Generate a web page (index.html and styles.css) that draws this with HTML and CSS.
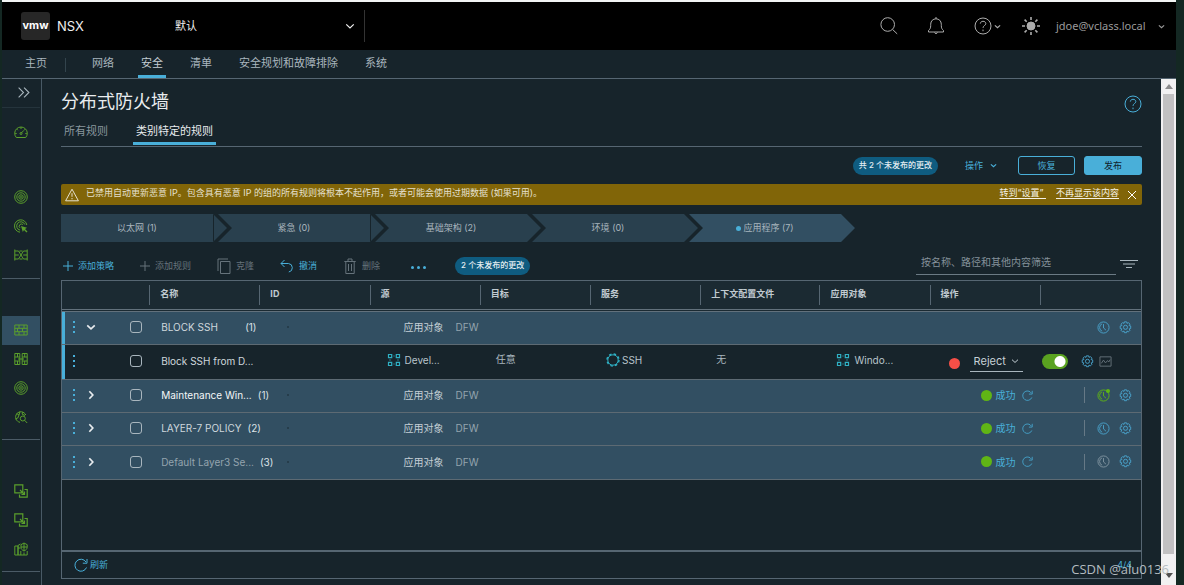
FILE: index.html
```html
<!DOCTYPE html>
<html lang="zh-CN">
<head>
<meta charset="utf-8">
<title>NSX - 分布式防火墙</title>
<link rel="stylesheet" href="styles.css">
</head>
<body>
<svg class="sprite" aria-hidden="true">
  <symbol id="chev-down" viewBox="0 0 12 12"><path d="M1.500 4l4.500 4.200L10.500 4"/></symbol>
  <symbol id="chev-right" viewBox="0 0 12 12"><path d="M4 1.500l4.200 4.500L4 10.500"/></symbol>
  <symbol id="double" viewBox="0 0 12 12"><path d="M1.500 1.500L6 6l-4.500 4.500M6.500 1.500L11 6l-4.500 4.500"/></symbol>
  <symbol id="search" viewBox="0 0 18 18"><circle cx="7.700" cy="7.500" r="6.800"/><path d="M12.600 12.500l4.600 4.400"/></symbol>
  <symbol id="bell" viewBox="0 0 18 18"><path d="M1.500 15v-1.500c1.500-1.200 2.200-2.500 2.200-5V7.200C3.700 4 6 1.800 9 1.800s5.300 2.200 5.300 5.400v1.300c0 2.500.7 3.800 2.200 5V15zM9 0v1.800M7.500 15.500a1.600 1.600 0 0 0 3 0"/></symbol>
  <symbol id="help" viewBox="0 0 18 18"><circle cx="9" cy="9" r="8"/><path d="M6.300 6.600C6.600 5 7.600 4.300 9 4.300c1.600 0 2.800.9 2.800 2.300 0 2-2.800 2-2.800 4.300"/><path d="M9 12.600v1.600"/></symbol>
  <symbol id="sun" viewBox="0 0 18 18"><circle cx="9" cy="9" r="4" fill="currentColor"/><path d="M9 0v3M9 15v3M0 9h3M15 9h3M2.600 2.600l2.100 2.100M13.300 13.300l2.100 2.100M15.400 2.600l-2.100 2.100M4.700 13.300l-2.100 2.100" stroke-width="1.600"/></symbol>
  <symbol id="gauge" viewBox="0 0 14 14"><path d="M2.300 12.500A6.300 6.300 0 1 1 11.700 12.500zM7 8.300l3-3M7 2v2M1.200 8.500h1.500M11.300 8.500h1.500M2.900 4.200l1 1M11.100 4.200l-.8.8"/><circle cx="7" cy="8.500" r="1"/></symbol>
  <symbol id="radar" viewBox="0 0 14 14"><circle cx="7" cy="7" r="6.300"/><circle cx="7" cy="7" r="4.200"/><circle cx="7" cy="7" r="2.200"/><circle cx="7" cy="7" r=".5"/></symbol>
  <symbol id="radar-cut" viewBox="0 0 14 14"><path d="M12.800 6A6.200 6.200 0 1 0 6 13.200M10.800 5.500a4.200 4.200 0 1 0-4.800 5.600M8.800 5.500a2.200 2.200 0 1 0-2.800 3.400"/><path d="M7 7l6 1.800-2 1.200 2.500 2.500-1 1L10 11l-1.200 2z" fill="currentColor" stroke="none"/></symbol>
  <symbol id="flow" viewBox="0 0 14 14"><path d="M.8 1.500v11M13.200 1.500v11M.8 3h3.700l5 8h3.700M.8 11h3.700l5-8h3.700M.8 7h4M9.200 7h4M5.500 3h3M5.500 11h3"/></symbol>
  <symbol id="brick" viewBox="0 0 14 12"><path d="M.8 1h12.400v10H.8zM.8 4.300h12.400M.8 7.700h12.400M5 1v3.300M10 1v3.300M3.500 4.300v3.400M8.500 4.300v3.400M5 7.700V11M10 7.700V11"/></symbol>
  <symbol id="gateway" viewBox="0 0 14 14"><path d="M.8 1.500h5v11h-5zM8.200 1.500h5v11h-5zM.8 5h5M.8 9h5M8.200 5h5M8.200 9h5M3.500 1.500V5M3.500 9v3.500M10.700 1.500V5M10.700 9v3.500M4 7h6"/></symbol>
  <symbol id="hunt" viewBox="0 0 14 14"><path d="M11.800 5A5.300 5.300 0 1 0 6 12.300M2.500 3.500L5 5l1-3.500M5 5L3.800 8 1.500 9M9 2L8 4l3 1.500"/><circle cx="8.800" cy="8.500" r="2.500"/><path d="M10.600 10.300l2.600 2.700"/></symbol>
  <symbol id="copy-link" viewBox="0 0 14 14"><path d="M.8.800h8v8h-8zM10.500 5.500h2.700v7.700H5.500v-2.700M6 6l4.500 4.500M10.500 7.500v3h-3" stroke-width="1.200"/></symbol>
  <symbol id="city" viewBox="0 0 14 14"><path d="M.8 13V4H4v9M4 6h2.500M.8 13h12.400V9M4 13V3.500L6.500 2M6.800 9v4M10 10.500V13M7 2.700L10 1l3.200 1.700V5c0 2-1.300 3.200-3.200 4-1.900-.8-3-2-3-4zM10 1v8M7 5h6"/></symbol>
  <symbol id="warn" viewBox="0 0 14 14"><path d="M7 1.200L13.400 12.800H.6zM7 5.200v3.600M7 10v1.300"/></symbol>
  <symbol id="cross" viewBox="0 0 10 10"><path d="M1 1l8 8M9 1L1 9"/></symbol>
  <symbol id="plus" viewBox="0 0 10 10"><path d="M5 0v10M0 5h10"/></symbol>
  <symbol id="copy" viewBox="0 0 14 16"><path d="M3.500 3.500h9.500v12H3.500zM1 13V1h10"/></symbol>
  <symbol id="undo" viewBox="0 0 14 14"><path d="M4.500 1L1 4.500 4.500 8M1 4.500h7.500A4.300 4.300 0 0 1 8.800 13"/></symbol>
  <symbol id="trash" viewBox="0 0 12 16"><path d="M.3 3.500h11.400M1.800 3.500v12h8.400v-12M4 3V1h4v2M4.500 6v7M7.500 6v7"/></symbol>
  <symbol id="filter" viewBox="0 0 18 10"><path d="M0 1.500h18M3 5h12M6 8.500h6"/></symbol>
  <symbol id="group" viewBox="0 0 14 14"><path d="M1.500 1.500h3.200v3.200H1.500zM9.300 1.500h3.200v3.200H9.300zM1.500 9.300h3.200v3.200H1.500zM9.300 9.300h3.200v3.200H9.300zM6.500 3h1M6.500 11h1M3 6.500v1M11 6.500v1" stroke-width="1.200"/></symbol>
  <symbol id="service" viewBox="0 0 14 14"><circle cx="7" cy="7" r="5.200"/><circle cx="7" cy="7" r="6" stroke-width="1.400" stroke-dasharray="2.500 2.200"/></symbol>
  <symbol id="clock" viewBox="0 0 14 14"><circle cx="7" cy="7" r="6"/><path d="M7 3.300V7.500l2.600 2.300M5.500 3A4.300 4.300 0 0 0 5.500 11"/></symbol>
  <symbol id="gear" viewBox="0 0 14 14"><path d="M5.800.9h2.400l.4 1.700 1.500-.9 1.700 1.700-.9 1.500 1.700.4v2.800l-1.700.4.9 1.500-1.700 1.700-1.500-.9-.4 1.800H5.800l-.4-1.800-1.500.9L2.200 10l.9-1.500-1.800-.4V5.300l1.800-.4-.9-1.500 1.700-1.700 1.500.9z"/><circle cx="7" cy="6.800" r="2.200"/></symbol>
  <symbol id="graph" viewBox="0 0 14 12"><path d="M1 1h12v10H1zM2.500 8l2.300-3.500L7 7.500 9.200 5l1.300 1.500L12 4"/></symbol>
  <symbol id="refresh" viewBox="0 0 14 14"><path d="M12.500 9.500A6 6 0 1 1 12 4M13 1v4.200H8.800"/></symbol>
</svg>

<div class="shell">
  <header class="topbar">
    <a class="brand" href="#"><span class="logo">vmw</span>NSX</a>
    <label class="tenant"><select aria-label="项目"><option>默认</option></select><svg class="ic s10"><use href="#chev-down"/></svg></label>
    <div class="tools">
      <button aria-label="搜索"><svg class="ic s18"><use href="#search"/></svg></button>
      <button aria-label="通知"><svg class="ic s18"><use href="#bell"/></svg></button>
      <button aria-label="帮助"><svg class="ic s18"><use href="#help"/></svg><svg class="ic s6"><use href="#chev-down"/></svg></button>
      <button aria-label="主题"><svg class="ic s18"><use href="#sun"/></svg></button>
      <button class="user">jdoe@vclass.local<svg class="ic s6"><use href="#chev-down"/></svg></button>
    </div>
  </header>

  <nav class="mainnav">
    <a class="home" href="#">主页</a>
    <a href="#">网络</a>
    <a class="on" href="#">安全</a>
    <a href="#">清单</a>
    <a href="#">安全规划和故障排除</a>
    <a href="#">系统</a>
  </nav>

  <div class="body">
    <nav class="side" aria-label="安全">
      <button class="expand" aria-label="展开"><svg class="ic s12"><use href="#double"/></svg></button>
      <div class="grp first">
        <a class="lead" href="#" aria-label="概览"><svg class="ic s14"><use href="#gauge"/></svg></a>
        <a href="#" aria-label="威胁"><svg class="ic s14"><use href="#radar"/></svg></a>
        <a href="#" aria-label="事件"><svg class="ic s14"><use href="#radar-cut"/></svg></a>
        <a href="#" aria-label="流量"><svg class="ic s14"><use href="#flow"/></svg></a>
      </div>
      <div class="grp">
        <a class="on" href="#" aria-label="分布式防火墙"><svg class="ic s14"><use href="#brick"/></svg></a>
        <a href="#" aria-label="网关防火墙"><svg class="ic s14"><use href="#gateway"/></svg></a>
        <a href="#" aria-label="入侵检测"><svg class="ic s14"><use href="#radar"/></svg></a>
        <a href="#" aria-label="恶意软件"><svg class="ic s14"><use href="#hunt"/></svg></a>
      </div>
      <div class="grp">
        <a href="#" aria-label="东西向"><svg class="ic s14"><use href="#copy-link"/></svg></a>
        <a href="#" aria-label="南北向"><svg class="ic s14"><use href="#copy-link"/></svg></a>
        <a href="#" aria-label="设置"><svg class="ic s14"><use href="#city"/></svg></a>
      </div>
    </nav>

    <main class="content">
      <div class="title"><h1>分布式防火墙</h1><button aria-label="帮助"><svg class="ic s18"><use href="#help"/></svg></button></div>
      <div class="tabs"><a href="#">所有规则</a><a class="on" href="#">类别特定的规则</a></div>

      <div class="actions">
        <span class="badge">共 2 个未发布的更改</span>
        <button class="menu">操作<svg class="ic s6"><use href="#chev-down"/></svg></button>
        <button class="btn">恢复</button>
        <button class="btn solid">发布</button>
      </div>

      <div class="banner">
        <svg class="ic s14"><use href="#warn"/></svg>
        <p>已禁用自动更新恶意 IP。包含具有恶意 IP 的组的所有规则将根本不起作用，或者可能会使用过期数据 (如果可用)。</p>
        <a href="#">转到“设置”&nbsp;</a><a href="#">不再显示该内容</a>
        <button aria-label="关闭"><svg class="ic s10"><use href="#cross"/></svg></button>
      </div>

      <div class="steps">
        <a class="first seam" href="#">以太网 (1)</a>
        <a class="seam" href="#">紧急 (0)</a>
        <a href="#">基础架构 (2)</a>
        <a href="#">环境 (0)</a>
        <a class="on" href="#"><i></i>应用程序 (7)</a>
      </div>

      <div class="toolbar">
        <button><svg class="ic s10"><use href="#plus"/></svg>添加策略</button>
        <button disabled><svg class="ic s10"><use href="#plus"/></svg>添加规则</button>
        <button disabled><svg class="ic s16"><use href="#copy"/></svg>克隆</button>
        <button><svg class="ic s14"><use href="#undo"/></svg>撤消</button>
        <button disabled><svg class="ic s16"><use href="#trash"/></svg>删除</button>
        <button class="more" aria-label="更多"><i></i><i></i><i></i></button>
        <span class="badge">2 个未发布的更改</span>
        <input class="search" type="text" aria-label="筛选" placeholder="按名称、路径和其他内容筛选">
        <button class="filter" aria-label="筛选器"><svg class="ic s18"><use href="#filter"/></svg></button>
      </div>

      <section class="panel">
        <table>
          <colgroup><col class="c-sel"><col class="c-std"><col class="c-std"><col class="c-std"><col class="c-std"><col class="c-std"><col class="c-ctx"><col class="c-std"><col class="c-std"><col class="c-end"></colgroup>
          <thead>
            <tr><th></th><th><div>名称</div></th><th><div>ID</div></th><th><div>源</div></th><th><div>目标</div></th><th><div>服务</div></th><th><div>上下文配置文件</div></th><th><div>应用对象</div></th><th><div>操作</div></th><th><div>&nbsp;</div></th></tr>
          </thead>
          <tbody>
            <tr class="policy mark">
              <td><div class="sel"><button class="dots" aria-label="菜单"><i></i><i></i><i></i></button><button class="tog" aria-label="折叠"><svg class="ic s10"><use href="#chev-down"/></svg></button><input type="checkbox" aria-label="BLOCK SSH"></div></td>
              <td colspan="2"><div class="name"><span class="wide">BLOCK SSH</span><b>(1)</b><i></i></div></td>
              <td colspan="5"><div class="applied"><span>应用对象</span>DFW</div></td>
              <td></td>
              <td><div class="end"><button aria-label="时间"><svg class="ic s12"><use href="#clock"/></svg></button><button aria-label="设置"><svg class="ic s12"><use href="#gear"/></svg></button></div></td>
            </tr>
            <tr class="rule mark">
              <td><div class="sel"><button class="dots" aria-label="菜单"><i></i><i></i><i></i></button><span class="tog"></span><input type="checkbox" aria-label="Block SSH from D..."></div></td>
              <td colspan="2"><div class="name"><span>Block SSH from D...</span></div></td>
              <td><div class="obj"><svg class="ic s14"><use href="#group"/></svg>Devel...</div></td>
              <td><div class="val">任意</div></td>
              <td><div class="obj svc"><svg class="ic s14"><use href="#service"/></svg>SSH</div></td>
              <td><div class="val">无</div></td>
              <td><div class="obj"><svg class="ic s14"><use href="#group"/></svg>Windo...</div></td>
              <td><div class="reject"><i class="dot red"></i><label><select aria-label="操作"><option>Reject</option></select><svg class="ic s8"><use href="#chev-down"/></svg></label></div></td>
              <td><div class="rule-end"><input class="switch" type="checkbox" checked aria-label="启用"><button aria-label="设置"><svg class="ic s12"><use href="#gear"/></svg></button><button class="dim" aria-label="统计"><svg class="ic s12"><use href="#graph"/></svg></button></div></td>
            </tr>
            <tr class="policy">
              <td><div class="sel"><button class="dots" aria-label="菜单"><i></i><i></i><i></i></button><button class="tog" aria-label="展开"><svg class="ic s10"><use href="#chev-right"/></svg></button><input type="checkbox" aria-label="Maintenance Win..."></div></td>
              <td colspan="2"><div class="name"><span class="lit">Maintenance Win...</span><b>(1)</b><i></i></div></td>
              <td colspan="5"><div class="applied"><span>应用对象</span>DFW</div></td>
              <td><div class="status"><i class="dot"></i>成功<button aria-label="刷新"><svg class="ic s11"><use href="#refresh"/></svg></button></div></td>
              <td><div class="end bar"><button class="sched" aria-label="时间"><svg class="ic s12"><use href="#clock"/></svg></button><button aria-label="设置"><svg class="ic s12"><use href="#gear"/></svg></button></div></td>
            </tr>
            <tr class="policy">
              <td><div class="sel"><button class="dots" aria-label="菜单"><i></i><i></i><i></i></button><button class="tog" aria-label="展开"><svg class="ic s10"><use href="#chev-right"/></svg></button><input type="checkbox" aria-label="LAYER-7 POLICY"></div></td>
              <td colspan="2"><div class="name"><span>LAYER-7 POLICY</span><b>(2)</b><i></i></div></td>
              <td colspan="5"><div class="applied"><span>应用对象</span>DFW</div></td>
              <td><div class="status"><i class="dot"></i>成功<button aria-label="刷新"><svg class="ic s11"><use href="#refresh"/></svg></button></div></td>
              <td><div class="end bar"><button aria-label="时间"><svg class="ic s12"><use href="#clock"/></svg></button><button aria-label="设置"><svg class="ic s12"><use href="#gear"/></svg></button></div></td>
            </tr>
            <tr class="policy">
              <td><div class="sel"><button class="dots" aria-label="菜单"><i></i><i></i><i></i></button><button class="tog" aria-label="展开"><svg class="ic s10"><use href="#chev-right"/></svg></button><input type="checkbox" aria-label="Default Layer3 Se..."></div></td>
              <td colspan="2"><div class="name"><span class="faint">Default Layer3 Se...</span><b>(3)</b><i></i></div></td>
              <td colspan="5"><div class="applied"><span>应用对象</span>DFW</div></td>
              <td><div class="status"><i class="dot"></i>成功<button aria-label="刷新"><svg class="ic s11"><use href="#refresh"/></svg></button></div></td>
              <td><div class="end bar"><button class="gray" aria-label="时间"><svg class="ic s12"><use href="#clock"/></svg></button><button aria-label="设置"><svg class="ic s12"><use href="#gear"/></svg></button></div></td>
            </tr>
          </tbody>
        </table>
        <footer><button><svg class="ic s14"><use href="#refresh"/></svg>刷新</button><span>4/4</span></footer>
      </section>
    </main>

    <div class="scroll" aria-hidden="true"><i class="up"></i><span></span><i class="down"></i></div>
  </div>
</div>
<div class="watermark">CSDN @alu0136</div>
</body>
</html>
```

FILE: styles.css
```css
* { box-sizing: border-box; }
body {
  margin: 0;
  background: #142823;
  color: #a9b6be;
  font: 10px/16px Inter, "Noto Sans CJK SC", sans-serif;
}
a { color: inherit; text-decoration: none; }
button, select, input { font: inherit; color: inherit; margin: 0; }
button { display: inline-flex; align-items: center; padding: 0; border: 0; background: none; white-space: nowrap; }
h1, p { margin: 0; font-weight: 400; }

.sprite { position: absolute; width: 0; height: 0; }
.ic { flex: none; fill: none; stroke: currentColor; stroke-width: 1; }
.s6 { width: 7px; height: 7px; stroke-width: 2; }
.s8 { width: 8px; height: 8px; }
.s10 { width: 10px; height: 10px; }
.s11 { width: 11px; height: 11px; }
.s12 { width: 13px; height: 13px; }
.s14 { width: 14px; height: 14px; }
.s16 { width: 14px; height: 16px; }
.s18 { width: 18px; height: 18px; }

.shell {
  display: flex;
  flex-direction: column;
  min-height: 100vh;
  margin: 0 8px 0 2px;
  border-top: 2px solid #f2f4f4;
  background: #17242b;
}

.topbar { display: flex; align-items: center; height: 48px; padding-left: 19px; background: #000; }
.brand { display: flex; align-items: center; gap: 7px; width: 154px; color: #f0f0f0; font-size: 13px; }
.logo {
  width: 29px; height: 28px; border-radius: 3px; background: #272727; color: #fff;
  font: bold 11px/26px Inter, sans-serif; text-align: center;
}
.tenant { display: flex; align-items: center; width: 190px; height: 32px; padding-right: 9px; border-right: 1px solid #333; color: #f0f0f0; }
.tenant select { flex: 1; font-size: 11px; }
.tenant svg { stroke-width: 1.5; }
select { appearance: none; padding: 0; border: 0; background: transparent; }
.tools { display: flex; align-items: center; margin-left: auto; padding-right: 11px; color: #adadad; }
.tools button { margin-right: 29px; }
.tools button:nth-child(3) { gap: 2px; margin-right: 21px; }
.tools button:nth-child(4) { margin-right: 16px; }
.tools .user { gap: 8px; margin-right: 0; color: #9a9a9a; font: 11px/16px "Noto Sans", sans-serif; }
.tools .user { min-width: 109px; justify-content: space-between; }

.mainnav { display: flex; height: 29px; padding-left: 23px; border-bottom: 1px solid #566672; font-size: 11px; line-height: 26px; }
.mainnav a { height: 28px; margin-right: 21px; padding: 0 3px; white-space: nowrap; }
.mainnav .home { padding: 0 19px 0 0; margin-right: 23px; background: linear-gradient(#33444d, #33444d) right 8px / 1px 14px no-repeat; }
.mainnav .on { border-bottom: 3px solid #49afd9; color: #c3cdd3; }

.body { display: flex; flex: 1; }

.side { width: 40px; border-right: 1px solid #485965; color: #5b9f2c; }
.side a, .expand { display: flex; align-items: center; justify-content: center; height: 29px; padding-bottom: 1px; }
.expand { width: 38px; padding-left: 4px; border-bottom: 1px solid #25343c; color: #a9b6be; }
.grp { width: 38px; padding: 37px 0 7px; border-bottom: 1px solid #4b5b66; }
.grp.first { padding: 10px 0 8px; }
.lead { margin-bottom: 36px; }
.side .on { background: #324f62; }

.content { display: flex; flex-direction: column; flex: 1; min-width: 0; padding: 8px 19px 6px; }
.title { display: flex; align-items: center; justify-content: space-between; height: 30px; color: #49afd9; }
.title h1 { color: #e9ecef; font-size: 18px; line-height: 26px; }
.title button { margin-top: 3px; }
.tabs { display: flex; gap: 22px; height: 30px; border-bottom: 1px solid #566672; font-size: 11px; line-height: 29px; }
.tabs a { height: 28px; padding: 0 3px; color: #8a979e; }
.tabs .on { border-bottom: 3px solid #49afd9; color: #e9ecef; }

.actions { display: flex; align-items: center; justify-content: flex-end; height: 37px; font-size: 9px; }
.badge { padding: 0 6px 2px; border-radius: 9px; background: #0f5c80; color: #e3edf2; font-size: 8px; font-weight: 500; line-height: 16px; white-space: nowrap; }
.menu { gap: 7px; margin: 0 21px 0 27px; color: #49afd9; }
.btn { justify-content: center; width: 57px; height: 19px; border: 1px solid #49afd9; border-radius: 3px; color: #49afd9; }
.btn.solid { width: 58px; margin-left: 9px; background: #49afd9; color: #10222c; }

.banner { display: flex; align-items: center; height: 21px; padding: 0 5px 0 4px; border-radius: 2px; background: #816508; color: #e5e0cf; font-size: 9px; line-height: 16px; }
.banner p, .banner a { padding-bottom: 3px; white-space: nowrap; }
.banner p { flex: 1; margin-left: 7px; }
.banner a { margin-left: 10px; color: #f4f1e6; text-decoration: underline; text-underline-offset: 2px; }
.banner button { margin-left: 8px; color: #fff; }

.steps { display: flex; margin: 9px 0; font-size: 9px; }
.steps a {
  position: relative; flex: 0 1 166px; padding-right: 14px; background: #29404e; line-height: 28px; text-align: center; white-space: nowrap;
  clip-path: polygon(0 0, calc(100% - 14px) 0, 100% 50%, calc(100% - 14px) 100%, 0 100%, 14px 50%);
}
.steps a + a { margin-left: -9px; }
.steps .first { clip-path: polygon(0 0, calc(100% - 14px) 0, 100% 50%, calc(100% - 14px) 100%, 0 100%); }
.seam::after { content: ""; position: absolute; top: 0; right: 13px; width: 1px; height: 100%; background: #17242b; }
.steps .on { background: #324f62; }
.steps i { display: inline-block; width: 5px; height: 5px; margin-right: 2px; border-radius: 50%; background: #49afd9; vertical-align: middle; }

.toolbar { display: flex; align-items: center; height: 29px; font-size: 9px; }
.toolbar button { gap: 5px; margin-right: 26px; color: #49afd9; }
.toolbar button:first-child { margin-left: 2px; }
.toolbar button:disabled { color: #66737b; }
.toolbar .more { gap: 3px; margin: 4px 29px 0 5px; }
.more i { width: 3px; height: 3px; border-radius: 50%; background: currentColor; }
.search { width: 200px; height: 24px; margin: 0 0 6px auto; padding: 0 5px; border: 0; border-bottom: 1px solid #6b7a84; background: transparent; font-size: 10px; }
.search::placeholder { color: #84919a; }
.toolbar .filter { margin: 0 4px 3px 4px; color: #a9b6be; }

.panel { display: flex; flex-direction: column; flex: 1; border: 1px solid #566672; }
table { width: 100%; table-layout: fixed; border-collapse: separate; border-spacing: 0; }
.c-sel { width: 87px; }
.c-std { width: 110px; }
.c-ctx { width: 119px; }
.c-end { width: 101px; }
th { height: 31px; padding: 0; border-bottom: 3px double #62717c; background: #1b2a32; color: #c1cbd1; font-size: 9px; font-weight: 700; text-align: left; }
th div { height: 20px; padding-left: 10px; border-left: 1px solid #566672; line-height: 18px; white-space: nowrap; }
td { height: 33px; padding: 0 0 2px; border-bottom: 1px solid #5d6a73; }
.rule td { height: 35px; }
tr:last-child td { height: 34px; }
.policy td { background: #324f62; }
.mark td:first-child { box-shadow: inset 3px 0 #49afd9; }
td > div { display: flex; align-items: center; white-space: nowrap; }

.sel { padding-left: 11px; }
.dots { flex-direction: column; gap: 3px; color: #49afd9; }
.dots i { width: 2px; height: 2px; background: currentColor; }
.tog { width: 10px; margin: 0 34px 0 11px; color: #e9ecef; }
.tog svg { stroke-width: 2; }
.sel input { appearance: none; width: 12px; height: 12px; border: 1px solid #a9b6be; border-radius: 3px; }
.name { gap: 6px; width: 140px; padding-left: 12px; color: #cfd8dd; }
.name b { color: #dbe2e6; font-weight: 400; }
.name .wide { min-width: 78px; }
.name .lit { color: #f4f7f8; }
.name .faint { color: #94a4ae; }
.name i { width: 2px; height: 2px; margin-left: auto; background: #263d4b; }
.applied { gap: 12px; padding-left: 34px; color: #94a4ae; }
.applied span { color: #c5d0d6; }
.obj { gap: 4px; padding: 0 0 3px 17px; color: #b9c4cb; }
.obj svg { color: #2fb0c4; }
.svc { gap: 2px; padding-left: 16px; }
.val { padding: 0 0 4px 16px; }
.dot { width: 11px; height: 11px; border-radius: 50%; background: #60b515; }
.dot.red { margin-top: 4px; background: #f54f47; }
.reject { gap: 10px; padding-left: 19px; color: #c5d0d6; font-size: 11px; }
.reject label { display: flex; align-items: center; width: 53px; padding: 0 4px; border-bottom: 1px solid #a9b6be; line-height: 20px; }
.reject select { flex: 1; min-width: 0; }
.reject svg { stroke-width: 1.5; }
.rule-end { gap: 5px; padding-left: 2px; }
.switch { appearance: none; width: 26px; height: 15px; margin-right: 8px; border-radius: 8px; background: radial-gradient(circle at 18px 50%, #fff 5px, transparent 6px) #5aa220; }
.rule-end button, .end button { color: #49a3cc; }
.rule-end .dim { color: #66737b; }
.status { gap: 4px; padding-left: 51px; color: #49afd9; }
.status button { margin-left: 2px; }
.end { justify-content: flex-end; gap: 9px; padding-right: 9px; }
.bar::before { content: ""; width: 1px; height: 16px; margin-right: 3px; background: #667986; }
.end .gray { color: #8295a1; }
.end .sched { position: relative; color: #60b515; }
.sched::after { content: ""; position: absolute; top: 0; right: 0; width: 4px; height: 4px; border-radius: 50%; background: #60b515; }

footer { display: flex; align-items: center; justify-content: space-between; height: 28px; margin-top: auto; padding: 0 9px 0 12px; border-top: 2px solid #566672; color: #49afd9; font-size: 9px; }
footer button { gap: 2px; }

.scroll { display: flex; flex-direction: column; align-items: center; gap: 5px; width: 15px; padding: 5px 2px 7px; background: #f1f1f1; }
.scroll span { flex: 1; width: 11px; margin-bottom: 14px; background: #c1c1c1; }
.scroll i { border: 4px solid transparent; border-top-width: 0; border-bottom: 5px solid #8c8c8c; }
.scroll .down { border-top: 5px solid #505050; border-bottom-width: 0; }
.watermark { position: absolute; right: 15px; bottom: 7px; color: #b4bcc0; font: 13px/18px "Open Sans", sans-serif; }
```
